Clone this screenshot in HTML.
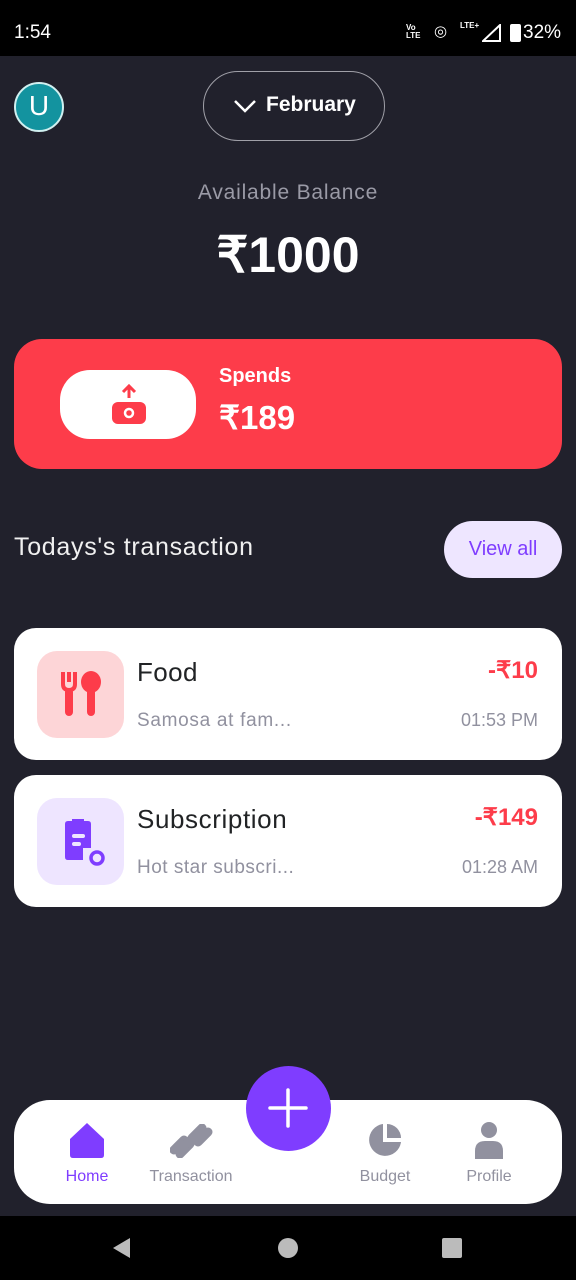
<!DOCTYPE html>
<html><head><meta charset="utf-8"><style>
*{margin:0;padding:0;box-sizing:border-box}
body{width:576px;height:1280px;background:#21212c;font-family:"Liberation Sans",sans-serif;position:relative;overflow:hidden;color:#fff}
.abs{position:absolute}
.sb{top:0;left:0;width:576px;height:56px;background:#000}
.card{background:#fff;border-radius:22px}
</style></head><body>
<div class="abs sb">
 <div class="abs" style="left:14px;top:22px;font-size:19px;color:#fff">1:54</div>
 <div class="abs" style="left:406px;top:24px;font-size:8px;line-height:8px;color:#fff;font-weight:bold">Vo<br>LTE</div>
 <div class="abs" style="left:434px;top:22px;font-size:15px">◎</div>
 <div class="abs" style="left:460px;top:21px;font-size:8px;font-weight:bold">LTE+</div>
 <svg class="abs" style="left:482px;top:24px" width="20" height="18"><path d="M18 1 L18 17 L1 17Z" fill="none" stroke="#fff" stroke-width="2"/></svg>
 <div class="abs" style="left:510px;top:24px;width:11px;height:18px;border-radius:2px;background:#fff"></div>
 <div class="abs" style="left:523px;top:22px;font-size:19px">32%</div>
</div>
<div class="abs" style="left:14px;top:82px;width:50px;height:50px;border-radius:50%;background:#13939f;border:2px solid #d0f0f0;font-size:28px;text-align:center;line-height:44px">U</div>
<div class="abs" style="left:203px;top:71px;width:182px;height:70px;border-radius:35px;border:1.5px solid #a0a0a8;font-size:21px;font-weight:bold;line-height:66px;padding-left:62px">February</div>
<svg class="abs" style="left:233px;top:96px" width="24" height="20"><path d="M2 5 L12 15 L22 5" fill="none" stroke="#fff" stroke-width="2.5"/></svg>
<div class="abs" style="left:0;width:576px;top:181px;text-align:center;font-size:21px;letter-spacing:0.8px;color:#9a9aa6">Available Balance</div>
<div class="abs" style="left:0;width:576px;top:226px;text-align:center;font-size:50px;font-weight:bold">₹1000</div>
<div class="abs" style="left:14px;top:339px;width:548px;height:130px;border-radius:28px;background:#fd3c4a"></div>
<div class="abs" style="left:60px;top:370px;width:136px;height:69px;border-radius:30px;background:#fff"></div>
<svg class="abs" style="left:110px;top:384px" width="38" height="42"><path d="M19 14 V2 M13 8 L19 2 L25 8" stroke="#fd3c4a" stroke-width="3" fill="none"/><rect x="2" y="18" width="34" height="22" rx="6" fill="#fd3c4a"/><circle cx="19" cy="29" r="4" fill="none" stroke="#fff" stroke-width="2.5"/></svg>
<div class="abs" style="left:219px;top:365px;font-size:20px;font-weight:bold">Spends</div>
<div class="abs" style="left:219px;top:398px;font-size:33px;font-weight:bold">₹189</div>
<div class="abs" style="left:14px;top:533px;font-size:25px;letter-spacing:0.7px;color:#f0f0f0">Todays's transaction</div>
<div class="abs" style="left:444px;top:521px;width:118px;height:57px;border-radius:29px;background:#eee6ff;color:#7f3dff;font-size:20px;text-align:center;line-height:57px">View all</div>

<div class="abs card" style="left:14px;top:628px;width:548px;height:132px"></div>
<div class="abs" style="left:37px;top:651px;width:87px;height:87px;border-radius:20px;background:#fdd5d7"></div>
<svg class="abs" style="left:60px;top:670px" width="42" height="48"><path d="M3 2 V14 Q3 20 9 20 Q15 20 15 14 V2 M9 2 V12" stroke="#fd3c4a" stroke-width="4" fill="none"/><rect x="5" y="18" width="8" height="28" rx="4" fill="#fd3c4a"/><ellipse cx="31" cy="12" rx="10" ry="11" fill="#fd3c4a"/><rect x="27" y="18" width="8" height="28" rx="4" fill="#fd3c4a"/></svg>
<div class="abs" style="left:137px;top:657px;font-size:26px;letter-spacing:0.4px;color:#212325">Food</div>
<div class="abs" style="left:137px;top:710px;font-size:19px;letter-spacing:0.7px;color:#91919f">Samosa at fam...</div>
<div class="abs" style="right:38px;top:656px;font-size:24px;font-weight:bold;color:#fd3c4a">-₹10</div>
<div class="abs" style="right:38px;top:710px;font-size:18px;color:#91919f">01:53 PM</div>

<div class="abs card" style="left:14px;top:775px;width:548px;height:132px"></div>
<div class="abs" style="left:37px;top:798px;width:87px;height:87px;border-radius:20px;background:#eee5ff"></div>
<svg class="abs" style="left:61px;top:818px" width="46" height="50"><path d="M4 6 Q4 3 7 3 H11 V1 H23 V3 H27 Q30 3 30 6 V30 H22 V42 H7 Q4 42 4 39Z" fill="#7f3dff"/><rect x="11" y="16" width="13" height="4" rx="2" fill="#eee5ff"/><rect x="11" y="24" width="9" height="4" rx="2" fill="#eee5ff"/><circle cx="36" cy="40" r="6" fill="none" stroke="#7f3dff" stroke-width="3.5"/></svg>
<div class="abs" style="left:137px;top:804px;font-size:26px;letter-spacing:0.6px;color:#212325">Subscription</div>
<div class="abs" style="left:137px;top:857px;font-size:19px;letter-spacing:0.5px;color:#91919f">Hot star subscri...</div>
<div class="abs" style="right:38px;top:803px;font-size:24px;font-weight:bold;color:#fd3c4a">-₹149</div>
<div class="abs" style="right:38px;top:857px;font-size:18px;color:#91919f">01:28 AM</div>

<div class="abs" style="left:14px;top:1100px;width:548px;height:104px;border-radius:36px;background:#fff"></div>
<div class="abs" style="left:246px;top:1066px;width:85px;height:85px;border-radius:50%;background:#7f3dff"></div>
<svg class="abs" style="left:266px;top:1086px" width="44" height="44"><path d="M22 4 V40 M4 22 H40" stroke="#fff" stroke-width="3.5" stroke-linecap="round"/></svg>
<svg class="abs" style="left:68px;top:1122px" width="38" height="38"><path d="M19 1 L36 17 V33 Q36 36 33 36 H5 Q2 36 2 33 V17Z" fill="#7f3dff"/></svg>
<svg class="abs" style="left:170px;top:1124px" width="44" height="34"><path d="M4 26 L14 16 M10 30 L20 20 M22 14 L32 4 M28 18 L38 8" stroke="#91919f" stroke-width="9" stroke-linecap="round"/><path d="M16 20 L28 12" stroke="#91919f" stroke-width="10"/></svg>
<svg class="abs" style="left:367px;top:1122px" width="36" height="36"><path d="M16 2 A16 16 0 1 0 34 20 H16Z" fill="#91919f"/><path d="M20 2 A14 14 0 0 1 34 16 H20Z" fill="#91919f"/></svg>
<svg class="abs" style="left:472px;top:1121px" width="34" height="38"><circle cx="17" cy="9" r="8" fill="#91919f"/><path d="M3 38 V30 Q3 20 13 20 H21 Q31 20 31 30 V38Z" fill="#91919f"/></svg>
<div class="abs" style="left:50px;width:74px;text-align:center;top:1168px;font-size:16px;color:#7f3dff">Home</div>
<div class="abs" style="left:140px;width:102px;text-align:center;top:1168px;font-size:16px;color:#91919f">Transaction</div>
<div class="abs" style="left:345px;width:80px;text-align:center;top:1168px;font-size:16px;color:#91919f">Budget</div>
<div class="abs" style="left:450px;width:78px;text-align:center;top:1168px;font-size:16px;color:#91919f">Profile</div>

<div class="abs" style="left:0;top:1216px;width:576px;height:64px;background:#000"></div>
<svg class="abs" style="left:110px;top:1236px" width="22" height="24"><path d="M20 2 V22 L3 12Z" fill="#bbb"/></svg>
<div class="abs" style="left:278px;top:1238px;width:20px;height:20px;border-radius:50%;background:#bbb"></div>
<div class="abs" style="left:442px;top:1238px;width:20px;height:20px;border-radius:2px;background:#bbb"></div>
</body></html>
